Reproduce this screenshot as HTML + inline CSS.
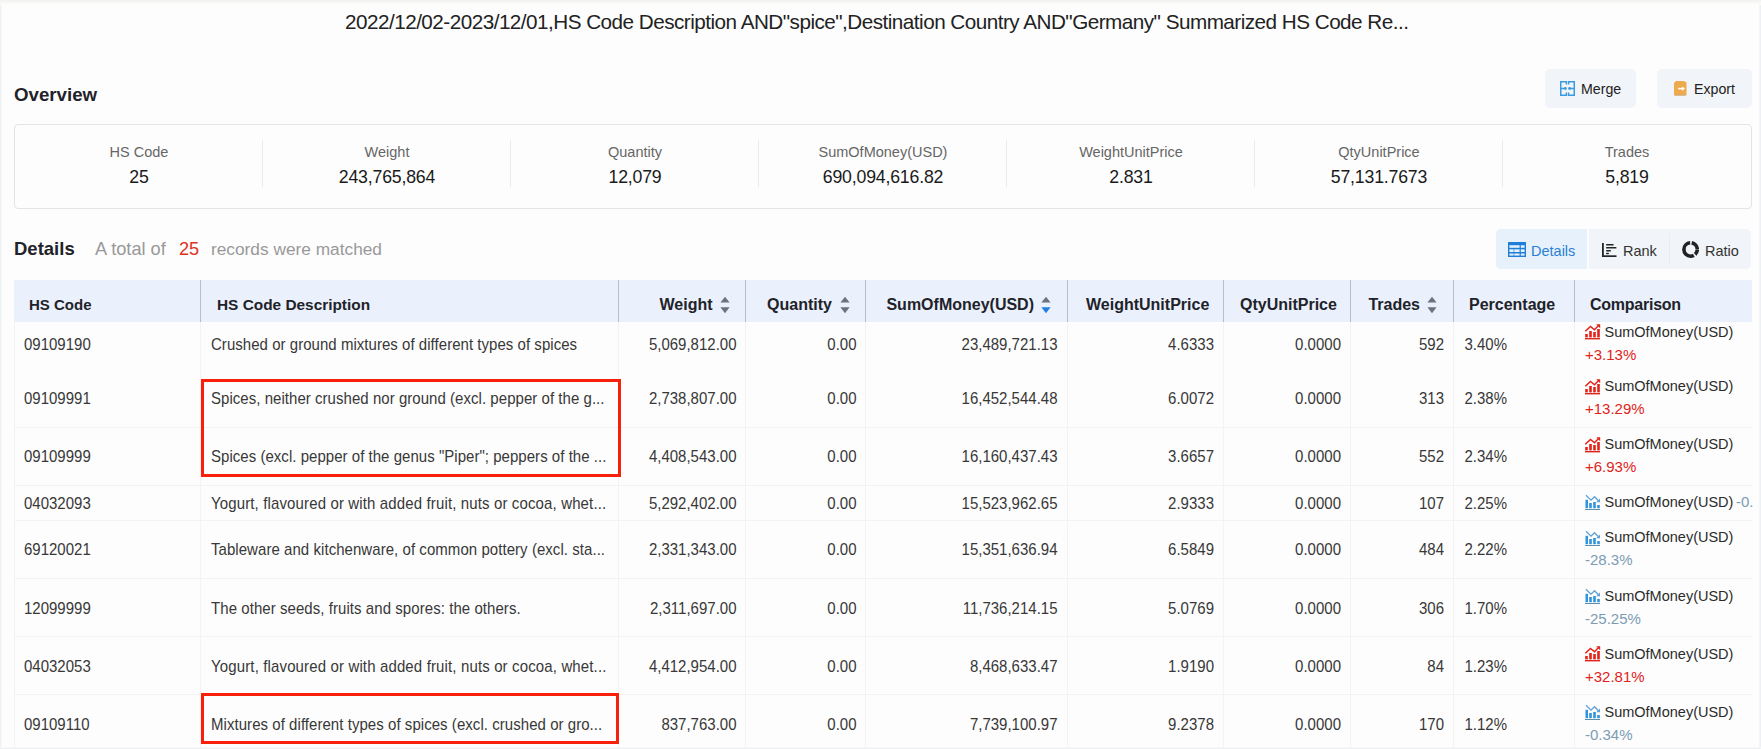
<!DOCTYPE html>
<html><head><meta charset="utf-8"><title>HS Code Report</title><style>
*{margin:0;padding:0;box-sizing:border-box}
html,body{width:1761px;height:749px;overflow:hidden;background:#fdfdfd;font-family:"Liberation Sans",sans-serif;color:#222;position:relative}
.t{position:absolute;white-space:nowrap;line-height:1}
.ic{position:absolute;display:block}
.btn{position:absolute;background:#f1f5f9;border-radius:5px}
.ov{position:absolute;left:14px;top:124px;width:1738px;height:85px;border:1px solid #e4e4e4;border-radius:4px}
.vs{position:absolute;top:140px;height:47px;width:1px;background:#ececec}
.tabs{position:absolute;left:1496px;top:229px;width:255px;height:40px;background:#f1f4f8;border-radius:5px}
.tabact{position:absolute;left:1496px;top:229px;width:93px;height:40px;background:#e7f1fb;border-radius:5px 0 0 5px;border-right:2px solid #fbfcfd}
.tabsep{position:absolute;top:233px;height:32px;width:1px;background:#e9ecf0}
.th{position:absolute;left:14px;top:280px;width:1738px;height:42px;background:#eaf1fc}
.hsep{position:absolute;top:280px;height:42px;width:1px;background:#b9bfca}
.bsep{position:absolute;top:322px;height:426px;width:1px;background:#f3f3f3}
.rline{position:absolute;left:14px;width:1738px;height:1px;background:#f3f3f3}
.rb{position:absolute;border:3px solid #f8200a}
.edge{position:absolute}
</style></head>
<body>
<div class="edge" style="left:0;top:0;width:1px;height:749px;background:#edf1f4"></div>
<div class="edge" style="left:1px;top:0;width:1px;height:749px;background:#f6f8f9"></div>
<div class="edge" style="left:1759px;top:0;width:1px;height:749px;background:#f3f5f7"></div>
<div class="edge" style="left:1760px;top:0;width:1px;height:749px;background:#edf1f4"></div>
<div class="edge" style="left:0;top:747px;width:1761px;height:1px;background:#f7f8f9"></div>
<div class="edge" style="left:0;top:748px;width:1761px;height:1px;background:#edf1f3"></div>
<div class="edge" style="left:0;top:0;width:1761px;height:5px;background:linear-gradient(#eef2f3,#f8f7f3 40%,#fdfdfd)"></div>
<div class="t" style="left:345px;top:12.48px;font-size:20.7px;color:#222;letter-spacing:-0.52px">2022/12/02-2023/12/01,HS Code Description AND"spice",Destination Country AND"Germany" Summarized HS Code Re...</div>
<div class="t" style="left:14px;top:85.67px;font-size:18.7px;color:#1f2329;font-weight:700;">Overview</div>
<div class="btn" style="left:1545px;top:69px;width:91px;height:39px"></div><div class="btn" style="left:1657px;top:69px;width:95px;height:39px"></div><svg class="ic" style="left:1560px;top:81px" width="15" height="15" viewBox="0 0 15 15"><g fill="none" stroke="#3a9be0" stroke-width="1.5"><path d="M6.4 3.6V0.75H0.75V14.25H6.4V11.4"/><path d="M8.6 3.6V0.75H14.25V14.25H8.6V11.4"/><path d="M0.75 7.5H5.5M9.5 7.5H14.25"/></g><circle cx="5.4" cy="7.5" r="1.4" fill="#3a9be0"/><circle cx="9.6" cy="7.5" r="1.4" fill="#3a9be0"/></svg><div class="t" style="left:1581px;top:81.98px;font-size:14.2px;color:#222;">Merge</div>
<svg class="ic" style="left:1674px;top:81px" width="14" height="15" viewBox="0 0 14 15"><path d="M2 0H9.5L12.5 1.3V14.6H0V2Z" fill="#edab4d"/><rect x="1" y="13.6" width="10" height="1" fill="#cfa98a"/><path d="M4.2 7.6H10.2" stroke="#fff" stroke-width="1.6"/><path d="M8 5.4L10.8 7.6L8 9.8Z" fill="#fff"/></svg><div class="t" style="left:1694px;top:81.98px;font-size:14.2px;color:#222;">Export</div>
<div class="ov"></div><div class="t" style="left:-161px;width:600px;text-align:center;top:144.73px;font-size:14.5px;color:#666;">HS Code</div>
<div class="t" style="left:-161px;width:600px;text-align:center;top:169.02px;font-size:17.7px;color:#1a1a1a;letter-spacing:-0.18px">25</div>
<div class="t" style="left:87px;width:600px;text-align:center;top:144.73px;font-size:14.5px;color:#666;">Weight</div>
<div class="t" style="left:87px;width:600px;text-align:center;top:169.02px;font-size:17.7px;color:#1a1a1a;letter-spacing:-0.18px">243,765,864</div>
<div class="vs" style="left:262px"></div><div class="t" style="left:335px;width:600px;text-align:center;top:144.73px;font-size:14.5px;color:#666;">Quantity</div>
<div class="t" style="left:335px;width:600px;text-align:center;top:169.02px;font-size:17.7px;color:#1a1a1a;letter-spacing:-0.18px">12,079</div>
<div class="vs" style="left:510px"></div><div class="t" style="left:583px;width:600px;text-align:center;top:144.73px;font-size:14.5px;color:#666;">SumOfMoney(USD)</div>
<div class="t" style="left:583px;width:600px;text-align:center;top:169.02px;font-size:17.7px;color:#1a1a1a;letter-spacing:-0.18px">690,094,616.82</div>
<div class="vs" style="left:758px"></div><div class="t" style="left:831px;width:600px;text-align:center;top:144.73px;font-size:14.5px;color:#666;">WeightUnitPrice</div>
<div class="t" style="left:831px;width:600px;text-align:center;top:169.02px;font-size:17.7px;color:#1a1a1a;letter-spacing:-0.18px">2.831</div>
<div class="vs" style="left:1006px"></div><div class="t" style="left:1079px;width:600px;text-align:center;top:144.73px;font-size:14.5px;color:#666;">QtyUnitPrice</div>
<div class="t" style="left:1079px;width:600px;text-align:center;top:169.02px;font-size:17.7px;color:#1a1a1a;letter-spacing:-0.18px">57,131.7673</div>
<div class="vs" style="left:1254px"></div><div class="t" style="left:1327px;width:600px;text-align:center;top:144.73px;font-size:14.5px;color:#666;">Trades</div>
<div class="t" style="left:1327px;width:600px;text-align:center;top:169.02px;font-size:17.7px;color:#1a1a1a;letter-spacing:-0.18px">5,819</div>
<div class="vs" style="left:1502px"></div><div class="t" style="left:14px;top:239.64px;font-size:18.5px;color:#1f2329;font-weight:700;">Details</div>
<div class="t" style="left:95px;top:239.89px;font-size:18.2px;color:#999;">A total of</div>
<div class="t" style="left:179px;top:239.89px;font-size:18.2px;color:#e0301e;">25</div>
<div class="t" style="left:211px;top:240.66px;font-size:17.3px;color:#999;">records were matched</div>
<div class="tabs"></div><div class="tabact"></div><div class="tabsep" style="left:1669px"></div><svg class="ic" style="left:1508px;top:242px" width="18" height="15" viewBox="0 0 18 15"><g fill="#1f7fd8"><rect x="0" y="0" width="18" height="3.2" rx="0.8"/><rect x="0" y="0" width="1.4" height="15"/><rect x="16.6" y="0" width="1.4" height="15"/><rect x="0" y="13.6" width="18" height="1.4"/><rect x="0" y="5.8" width="18" height="1.5"/><rect x="0" y="10" width="18" height="1.5"/><rect x="11.6" y="3" width="1.2" height="11"/><rect x="5.4" y="7" width="1" height="7" opacity="0.6"/></g></svg><div class="t" style="left:1531px;top:243.73px;font-size:14.5px;color:#2a7fd4;">Details</div>
<svg class="ic" style="left:1602px;top:243px" width="15" height="14" viewBox="0 0 15 14"><g fill="#242424"><rect x="0" y="0" width="1.8" height="14"/><rect x="0" y="12.3" width="14.5" height="1.7"/><rect x="4" y="1.1" width="7.7" height="1.5" rx="0.7"/><rect x="4" y="4.1" width="10.5" height="1.5" rx="0.7"/><rect x="4" y="7" width="5" height="1.5" rx="0.7"/><rect x="4" y="9.8" width="3" height="1.5" rx="0.7"/></g></svg><div class="t" style="left:1623px;top:243.73px;font-size:14.5px;color:#333;">Rank</div>
<svg class="ic" style="left:1682px;top:241px" width="17" height="17" viewBox="0 0 17 17"><circle cx="8.6" cy="8.5" r="6.7" fill="none" stroke="#222" stroke-width="3.6" stroke-dasharray="5.0 1.6 23.8 1.6 9.4 1.0" stroke-dashoffset="-0.5"/></svg><div class="t" style="left:1705px;top:243.73px;font-size:14.5px;color:#333;">Ratio</div>
<div class="th"></div><div class="hsep" style="left:200px"></div><div class="hsep" style="left:618px"></div><div class="hsep" style="left:745px"></div><div class="hsep" style="left:865px"></div><div class="hsep" style="left:1067px"></div><div class="hsep" style="left:1223px"></div><div class="hsep" style="left:1350px"></div><div class="hsep" style="left:1453px"></div><div class="hsep" style="left:1574px"></div><div class="t" style="left:29px;top:297.30px;font-size:15px;color:#1f2329;font-weight:700;">HS Code</div>
<div class="t" style="left:217px;top:296.96px;font-size:15.4px;color:#1f2329;font-weight:700;">HS Code Description</div>
<div class="t" style="right:1048.5px;top:297.46px;font-size:16px;color:#1f2329;font-weight:700;">Weight</div>
<div class="t" style="right:929px;top:297.46px;font-size:16px;color:#1f2329;font-weight:700;">Quantity</div>
<div class="t" style="right:727px;top:297.46px;font-size:16px;color:#1f2329;font-weight:700;">SumOfMoney(USD)</div>
<div class="t" style="left:1086px;top:297.46px;font-size:16px;color:#1f2329;font-weight:700;">WeightUnitPrice</div>
<div class="t" style="left:1240px;top:297.46px;font-size:16px;color:#1f2329;font-weight:700;">QtyUnitPrice</div>
<div class="t" style="right:341px;top:297.46px;font-size:16px;color:#1f2329;font-weight:700;">Trades</div>
<div class="t" style="left:1469px;top:297.46px;font-size:16px;color:#1f2329;font-weight:700;">Percentage</div>
<div class="t" style="left:1590px;top:297.46px;font-size:16px;color:#1f2329;font-weight:700;letter-spacing:-0.25px">Comparison</div>
<svg class="ic" style="left:720px;top:296px" width="10" height="18" viewBox="0 0 10 18"><path d="M5 0.8L9.6 6.6H0.4Z" fill="#6b7280"/><path d="M5 17.2L9.6 11.2H0.4Z" fill="#6b7280"/></svg>
<svg class="ic" style="left:840px;top:296px" width="10" height="18" viewBox="0 0 10 18"><path d="M5 0.8L9.6 6.6H0.4Z" fill="#6b7280"/><path d="M5 17.2L9.6 11.2H0.4Z" fill="#6b7280"/></svg>
<svg class="ic" style="left:1040.5px;top:296px" width="10" height="18" viewBox="0 0 10 18"><path d="M5 0.8L9.6 6.6H0.4Z" fill="#6b7280"/><path d="M5 17.2L9.6 11.2H0.4Z" fill="#1e7fe0"/></svg>
<svg class="ic" style="left:1427px;top:296px" width="10" height="18" viewBox="0 0 10 18"><path d="M5 0.8L9.6 6.6H0.4Z" fill="#6b7280"/><path d="M5 17.2L9.6 11.2H0.4Z" fill="#6b7280"/></svg>
<div class="bsep" style="left:14px"></div><div class="bsep" style="left:200px"></div><div class="bsep" style="left:618px"></div><div class="bsep" style="left:745px"></div><div class="bsep" style="left:865px"></div><div class="bsep" style="left:1067px"></div><div class="bsep" style="left:1223px"></div><div class="bsep" style="left:1350px"></div><div class="bsep" style="left:1453px"></div><div class="bsep" style="left:1574px"></div><div class="rline" style="top:427px"></div><div class="rline" style="top:485px"></div><div class="rline" style="top:520px"></div><div class="rline" style="top:578px"></div><div class="rline" style="top:636px"></div><div class="rline" style="top:694px"></div><div class="t" style="left:24px;top:336.80px;font-size:15px;color:#383838;;transform:scaleY(1.08);transform-origin:0 12.70px">09109190</div>
<div class="t" style="left:211px;top:336.80px;font-size:15px;color:#383838;letter-spacing:0.037px;transform:scaleY(1.08);transform-origin:0 12.70px">Crushed or ground mixtures of different types of spices</div>
<div class="t" style="right:1024.5px;top:336.80px;font-size:15px;color:#383838;;transform:scaleY(1.08);transform-origin:0 12.70px">5,069,812.00</div>
<div class="t" style="right:904.5px;top:336.80px;font-size:15px;color:#383838;;transform:scaleY(1.08);transform-origin:0 12.70px">0.00</div>
<div class="t" style="right:703.5px;top:336.80px;font-size:15px;color:#383838;;transform:scaleY(1.08);transform-origin:0 12.70px">23,489,721.13</div>
<div class="t" style="right:547px;top:336.80px;font-size:15px;color:#383838;;transform:scaleY(1.08);transform-origin:0 12.70px">4.6333</div>
<div class="t" style="right:420px;top:336.80px;font-size:15px;color:#383838;;transform:scaleY(1.08);transform-origin:0 12.70px">0.0000</div>
<div class="t" style="right:317px;top:336.80px;font-size:15px;color:#383838;;transform:scaleY(1.08);transform-origin:0 12.70px">592</div>
<div class="t" style="left:1464.5px;top:336.80px;font-size:15px;color:#383838;;transform:scaleY(1.08);transform-origin:0 12.70px">3.40%</div>
<svg class="ic" style="left:1585px;top:324.0px" width="16" height="16" viewBox="0 0 16 16"><g fill="#e2231a"><rect x="0" y="14" width="15" height="1.4"/><rect x="0.2" y="10" width="2.6" height="3.4"/><rect x="4.2" y="7" width="2.6" height="6.4"/><rect x="8.2" y="8" width="2.6" height="5.4"/><rect x="12.2" y="5" width="2.6" height="8.4"/></g><path d="M0.3 7.2L5.5 2.4L9.5 5.8L13.6 1.6" fill="none" stroke="#e2231a" stroke-width="1.5"/><path d="M11.2 0.3H15.2V4.3Z" fill="#e2231a"/></svg>
<div class="t" style="left:1604.5px;top:324.73px;font-size:14.5px;color:#2b2b2b;">SumOfMoney(USD)</div>
<div class="t" style="left:1585px;top:346.80px;font-size:15px;color:#e2231a;">+3.13%</div>
<div class="t" style="left:24px;top:391.30px;font-size:15px;color:#383838;;transform:scaleY(1.08);transform-origin:0 12.70px">09109991</div>
<div class="t" style="left:211px;top:391.30px;font-size:15px;color:#383838;letter-spacing:0.041px;transform:scaleY(1.08);transform-origin:0 12.70px">Spices, neither crushed nor ground (excl. pepper of the g...</div>
<div class="t" style="right:1024.5px;top:391.30px;font-size:15px;color:#383838;;transform:scaleY(1.08);transform-origin:0 12.70px">2,738,807.00</div>
<div class="t" style="right:904.5px;top:391.30px;font-size:15px;color:#383838;;transform:scaleY(1.08);transform-origin:0 12.70px">0.00</div>
<div class="t" style="right:703.5px;top:391.30px;font-size:15px;color:#383838;;transform:scaleY(1.08);transform-origin:0 12.70px">16,452,544.48</div>
<div class="t" style="right:547px;top:391.30px;font-size:15px;color:#383838;;transform:scaleY(1.08);transform-origin:0 12.70px">6.0072</div>
<div class="t" style="right:420px;top:391.30px;font-size:15px;color:#383838;;transform:scaleY(1.08);transform-origin:0 12.70px">0.0000</div>
<div class="t" style="right:317px;top:391.30px;font-size:15px;color:#383838;;transform:scaleY(1.08);transform-origin:0 12.70px">313</div>
<div class="t" style="left:1464.5px;top:391.30px;font-size:15px;color:#383838;;transform:scaleY(1.08);transform-origin:0 12.70px">2.38%</div>
<svg class="ic" style="left:1585px;top:378.5px" width="16" height="16" viewBox="0 0 16 16"><g fill="#e2231a"><rect x="0" y="14" width="15" height="1.4"/><rect x="0.2" y="10" width="2.6" height="3.4"/><rect x="4.2" y="7" width="2.6" height="6.4"/><rect x="8.2" y="8" width="2.6" height="5.4"/><rect x="12.2" y="5" width="2.6" height="8.4"/></g><path d="M0.3 7.2L5.5 2.4L9.5 5.8L13.6 1.6" fill="none" stroke="#e2231a" stroke-width="1.5"/><path d="M11.2 0.3H15.2V4.3Z" fill="#e2231a"/></svg>
<div class="t" style="left:1604.5px;top:379.23px;font-size:14.5px;color:#2b2b2b;">SumOfMoney(USD)</div>
<div class="t" style="left:1585px;top:401.30px;font-size:15px;color:#e2231a;">+13.29%</div>
<div class="t" style="left:24px;top:449.30px;font-size:15px;color:#383838;;transform:scaleY(1.08);transform-origin:0 12.70px">09109999</div>
<div class="t" style="left:211px;top:449.30px;font-size:15px;color:#383838;letter-spacing:0.033px;transform:scaleY(1.08);transform-origin:0 12.70px">Spices (excl. pepper of the genus "Piper"; peppers of the ...</div>
<div class="t" style="right:1024.5px;top:449.30px;font-size:15px;color:#383838;;transform:scaleY(1.08);transform-origin:0 12.70px">4,408,543.00</div>
<div class="t" style="right:904.5px;top:449.30px;font-size:15px;color:#383838;;transform:scaleY(1.08);transform-origin:0 12.70px">0.00</div>
<div class="t" style="right:703.5px;top:449.30px;font-size:15px;color:#383838;;transform:scaleY(1.08);transform-origin:0 12.70px">16,160,437.43</div>
<div class="t" style="right:547px;top:449.30px;font-size:15px;color:#383838;;transform:scaleY(1.08);transform-origin:0 12.70px">3.6657</div>
<div class="t" style="right:420px;top:449.30px;font-size:15px;color:#383838;;transform:scaleY(1.08);transform-origin:0 12.70px">0.0000</div>
<div class="t" style="right:317px;top:449.30px;font-size:15px;color:#383838;;transform:scaleY(1.08);transform-origin:0 12.70px">552</div>
<div class="t" style="left:1464.5px;top:449.30px;font-size:15px;color:#383838;;transform:scaleY(1.08);transform-origin:0 12.70px">2.34%</div>
<svg class="ic" style="left:1585px;top:436.5px" width="16" height="16" viewBox="0 0 16 16"><g fill="#e2231a"><rect x="0" y="14" width="15" height="1.4"/><rect x="0.2" y="10" width="2.6" height="3.4"/><rect x="4.2" y="7" width="2.6" height="6.4"/><rect x="8.2" y="8" width="2.6" height="5.4"/><rect x="12.2" y="5" width="2.6" height="8.4"/></g><path d="M0.3 7.2L5.5 2.4L9.5 5.8L13.6 1.6" fill="none" stroke="#e2231a" stroke-width="1.5"/><path d="M11.2 0.3H15.2V4.3Z" fill="#e2231a"/></svg>
<div class="t" style="left:1604.5px;top:437.23px;font-size:14.5px;color:#2b2b2b;">SumOfMoney(USD)</div>
<div class="t" style="left:1585px;top:459.30px;font-size:15px;color:#e2231a;">+6.93%</div>
<div class="t" style="left:24px;top:495.80px;font-size:15px;color:#383838;;transform:scaleY(1.08);transform-origin:0 12.70px">04032093</div>
<div class="t" style="left:211px;top:495.80px;font-size:15px;color:#383838;letter-spacing:0.133px;transform:scaleY(1.08);transform-origin:0 12.70px">Yogurt, flavoured or with added fruit, nuts or cocoa, whet...</div>
<div class="t" style="right:1024.5px;top:495.80px;font-size:15px;color:#383838;;transform:scaleY(1.08);transform-origin:0 12.70px">5,292,402.00</div>
<div class="t" style="right:904.5px;top:495.80px;font-size:15px;color:#383838;;transform:scaleY(1.08);transform-origin:0 12.70px">0.00</div>
<div class="t" style="right:703.5px;top:495.80px;font-size:15px;color:#383838;;transform:scaleY(1.08);transform-origin:0 12.70px">15,523,962.65</div>
<div class="t" style="right:547px;top:495.80px;font-size:15px;color:#383838;;transform:scaleY(1.08);transform-origin:0 12.70px">2.9333</div>
<div class="t" style="right:420px;top:495.80px;font-size:15px;color:#383838;;transform:scaleY(1.08);transform-origin:0 12.70px">0.0000</div>
<div class="t" style="right:317px;top:495.80px;font-size:15px;color:#383838;;transform:scaleY(1.08);transform-origin:0 12.70px">107</div>
<div class="t" style="left:1464.5px;top:495.80px;font-size:15px;color:#383838;;transform:scaleY(1.08);transform-origin:0 12.70px">2.25%</div>
<svg class="ic" style="left:1585px;top:494.0px" width="16" height="16" viewBox="0 0 16 16"><rect x="0" y="15" width="15" height="1" fill="#5f8fa8"/><g fill="#2f95dc"><rect x="0.5" y="5.8" width="2.5" height="8.4"/><rect x="4.2" y="9" width="2.6" height="5.2"/><rect x="8.2" y="8" width="2.6" height="6.2"/><rect x="12.2" y="11" width="2.6" height="3.2"/></g><path d="M1 1.3L6 6.2L9.5 2.7L13.5 6.8" fill="none" stroke="#5fa0d8" stroke-width="1.3"/><path d="M15 8.2H11.2L15 4.4Z" fill="#5fa0d8"/></svg>
<div class="t" style="left:1604.5px;top:494.73px;font-size:14.5px;color:#2b2b2b;">SumOfMoney(USD)</div>
<div class="t" style="left:1736px;top:494.30px;font-size:15px;color:#7c9cb4;">-0.</div>
<div class="t" style="left:24px;top:542.30px;font-size:15px;color:#383838;;transform:scaleY(1.08);transform-origin:0 12.70px">69120021</div>
<div class="t" style="left:211px;top:542.30px;font-size:15px;color:#383838;letter-spacing:0.053px;transform:scaleY(1.08);transform-origin:0 12.70px">Tableware and kitchenware, of common pottery (excl. sta...</div>
<div class="t" style="right:1024.5px;top:542.30px;font-size:15px;color:#383838;;transform:scaleY(1.08);transform-origin:0 12.70px">2,331,343.00</div>
<div class="t" style="right:904.5px;top:542.30px;font-size:15px;color:#383838;;transform:scaleY(1.08);transform-origin:0 12.70px">0.00</div>
<div class="t" style="right:703.5px;top:542.30px;font-size:15px;color:#383838;;transform:scaleY(1.08);transform-origin:0 12.70px">15,351,636.94</div>
<div class="t" style="right:547px;top:542.30px;font-size:15px;color:#383838;;transform:scaleY(1.08);transform-origin:0 12.70px">6.5849</div>
<div class="t" style="right:420px;top:542.30px;font-size:15px;color:#383838;;transform:scaleY(1.08);transform-origin:0 12.70px">0.0000</div>
<div class="t" style="right:317px;top:542.30px;font-size:15px;color:#383838;;transform:scaleY(1.08);transform-origin:0 12.70px">484</div>
<div class="t" style="left:1464.5px;top:542.30px;font-size:15px;color:#383838;;transform:scaleY(1.08);transform-origin:0 12.70px">2.22%</div>
<svg class="ic" style="left:1585px;top:529.5px" width="16" height="16" viewBox="0 0 16 16"><rect x="0" y="15" width="15" height="1" fill="#5f8fa8"/><g fill="#2f95dc"><rect x="0.5" y="5.8" width="2.5" height="8.4"/><rect x="4.2" y="9" width="2.6" height="5.2"/><rect x="8.2" y="8" width="2.6" height="6.2"/><rect x="12.2" y="11" width="2.6" height="3.2"/></g><path d="M1 1.3L6 6.2L9.5 2.7L13.5 6.8" fill="none" stroke="#5fa0d8" stroke-width="1.3"/><path d="M15 8.2H11.2L15 4.4Z" fill="#5fa0d8"/></svg>
<div class="t" style="left:1604.5px;top:530.23px;font-size:14.5px;color:#2b2b2b;">SumOfMoney(USD)</div>
<div class="t" style="left:1585px;top:552.30px;font-size:15px;color:#7c9cb4;">-28.3%</div>
<div class="t" style="left:24px;top:600.60px;font-size:15px;color:#383838;;transform:scaleY(1.08);transform-origin:0 12.70px">12099999</div>
<div class="t" style="left:211px;top:600.60px;font-size:15px;color:#383838;letter-spacing:0.061px;transform:scaleY(1.08);transform-origin:0 12.70px">The other seeds, fruits and spores: the others.</div>
<div class="t" style="right:1024.5px;top:600.60px;font-size:15px;color:#383838;;transform:scaleY(1.08);transform-origin:0 12.70px">2,311,697.00</div>
<div class="t" style="right:904.5px;top:600.60px;font-size:15px;color:#383838;;transform:scaleY(1.08);transform-origin:0 12.70px">0.00</div>
<div class="t" style="right:703.5px;top:600.60px;font-size:15px;color:#383838;;transform:scaleY(1.08);transform-origin:0 12.70px">11,736,214.15</div>
<div class="t" style="right:547px;top:600.60px;font-size:15px;color:#383838;;transform:scaleY(1.08);transform-origin:0 12.70px">5.0769</div>
<div class="t" style="right:420px;top:600.60px;font-size:15px;color:#383838;;transform:scaleY(1.08);transform-origin:0 12.70px">0.0000</div>
<div class="t" style="right:317px;top:600.60px;font-size:15px;color:#383838;;transform:scaleY(1.08);transform-origin:0 12.70px">306</div>
<div class="t" style="left:1464.5px;top:600.60px;font-size:15px;color:#383838;;transform:scaleY(1.08);transform-origin:0 12.70px">1.70%</div>
<svg class="ic" style="left:1585px;top:587.8px" width="16" height="16" viewBox="0 0 16 16"><rect x="0" y="15" width="15" height="1" fill="#5f8fa8"/><g fill="#2f95dc"><rect x="0.5" y="5.8" width="2.5" height="8.4"/><rect x="4.2" y="9" width="2.6" height="5.2"/><rect x="8.2" y="8" width="2.6" height="6.2"/><rect x="12.2" y="11" width="2.6" height="3.2"/></g><path d="M1 1.3L6 6.2L9.5 2.7L13.5 6.8" fill="none" stroke="#5fa0d8" stroke-width="1.3"/><path d="M15 8.2H11.2L15 4.4Z" fill="#5fa0d8"/></svg>
<div class="t" style="left:1604.5px;top:588.53px;font-size:14.5px;color:#2b2b2b;">SumOfMoney(USD)</div>
<div class="t" style="left:1585px;top:610.60px;font-size:15px;color:#7c9cb4;">-25.25%</div>
<div class="t" style="left:24px;top:658.80px;font-size:15px;color:#383838;;transform:scaleY(1.08);transform-origin:0 12.70px">04032053</div>
<div class="t" style="left:211px;top:658.80px;font-size:15px;color:#383838;letter-spacing:0.137px;transform:scaleY(1.08);transform-origin:0 12.70px">Yogurt, flavoured or with added fruit, nuts or cocoa, whet...</div>
<div class="t" style="right:1024.5px;top:658.80px;font-size:15px;color:#383838;;transform:scaleY(1.08);transform-origin:0 12.70px">4,412,954.00</div>
<div class="t" style="right:904.5px;top:658.80px;font-size:15px;color:#383838;;transform:scaleY(1.08);transform-origin:0 12.70px">0.00</div>
<div class="t" style="right:703.5px;top:658.80px;font-size:15px;color:#383838;;transform:scaleY(1.08);transform-origin:0 12.70px">8,468,633.47</div>
<div class="t" style="right:547px;top:658.80px;font-size:15px;color:#383838;;transform:scaleY(1.08);transform-origin:0 12.70px">1.9190</div>
<div class="t" style="right:420px;top:658.80px;font-size:15px;color:#383838;;transform:scaleY(1.08);transform-origin:0 12.70px">0.0000</div>
<div class="t" style="right:317px;top:658.80px;font-size:15px;color:#383838;;transform:scaleY(1.08);transform-origin:0 12.70px">84</div>
<div class="t" style="left:1464.5px;top:658.80px;font-size:15px;color:#383838;;transform:scaleY(1.08);transform-origin:0 12.70px">1.23%</div>
<svg class="ic" style="left:1585px;top:646.0px" width="16" height="16" viewBox="0 0 16 16"><g fill="#e2231a"><rect x="0" y="14" width="15" height="1.4"/><rect x="0.2" y="10" width="2.6" height="3.4"/><rect x="4.2" y="7" width="2.6" height="6.4"/><rect x="8.2" y="8" width="2.6" height="5.4"/><rect x="12.2" y="5" width="2.6" height="8.4"/></g><path d="M0.3 7.2L5.5 2.4L9.5 5.8L13.6 1.6" fill="none" stroke="#e2231a" stroke-width="1.5"/><path d="M11.2 0.3H15.2V4.3Z" fill="#e2231a"/></svg>
<div class="t" style="left:1604.5px;top:646.73px;font-size:14.5px;color:#2b2b2b;">SumOfMoney(USD)</div>
<div class="t" style="left:1585px;top:668.80px;font-size:15px;color:#e2231a;">+32.81%</div>
<div class="t" style="left:24px;top:716.80px;font-size:15px;color:#383838;;transform:scaleY(1.08);transform-origin:0 12.70px">09109110</div>
<div class="t" style="left:211px;top:716.80px;font-size:15px;color:#383838;letter-spacing:0.049px;transform:scaleY(1.08);transform-origin:0 12.70px">Mixtures of different types of spices (excl. crushed or gro...</div>
<div class="t" style="right:1024.5px;top:716.80px;font-size:15px;color:#383838;;transform:scaleY(1.08);transform-origin:0 12.70px">837,763.00</div>
<div class="t" style="right:904.5px;top:716.80px;font-size:15px;color:#383838;;transform:scaleY(1.08);transform-origin:0 12.70px">0.00</div>
<div class="t" style="right:703.5px;top:716.80px;font-size:15px;color:#383838;;transform:scaleY(1.08);transform-origin:0 12.70px">7,739,100.97</div>
<div class="t" style="right:547px;top:716.80px;font-size:15px;color:#383838;;transform:scaleY(1.08);transform-origin:0 12.70px">9.2378</div>
<div class="t" style="right:420px;top:716.80px;font-size:15px;color:#383838;;transform:scaleY(1.08);transform-origin:0 12.70px">0.0000</div>
<div class="t" style="right:317px;top:716.80px;font-size:15px;color:#383838;;transform:scaleY(1.08);transform-origin:0 12.70px">170</div>
<div class="t" style="left:1464.5px;top:716.80px;font-size:15px;color:#383838;;transform:scaleY(1.08);transform-origin:0 12.70px">1.12%</div>
<svg class="ic" style="left:1585px;top:704.0px" width="16" height="16" viewBox="0 0 16 16"><rect x="0" y="15" width="15" height="1" fill="#5f8fa8"/><g fill="#2f95dc"><rect x="0.5" y="5.8" width="2.5" height="8.4"/><rect x="4.2" y="9" width="2.6" height="5.2"/><rect x="8.2" y="8" width="2.6" height="6.2"/><rect x="12.2" y="11" width="2.6" height="3.2"/></g><path d="M1 1.3L6 6.2L9.5 2.7L13.5 6.8" fill="none" stroke="#5fa0d8" stroke-width="1.3"/><path d="M15 8.2H11.2L15 4.4Z" fill="#5fa0d8"/></svg>
<div class="t" style="left:1604.5px;top:704.73px;font-size:14.5px;color:#2b2b2b;">SumOfMoney(USD)</div>
<div class="t" style="left:1585px;top:726.80px;font-size:15px;color:#7c9cb4;">-0.34%</div>
<div class="rb" style="left:201px;top:379px;width:420px;height:98px"></div><div class="rb" style="left:201px;top:693px;width:418px;height:51px"></div></body></html>
